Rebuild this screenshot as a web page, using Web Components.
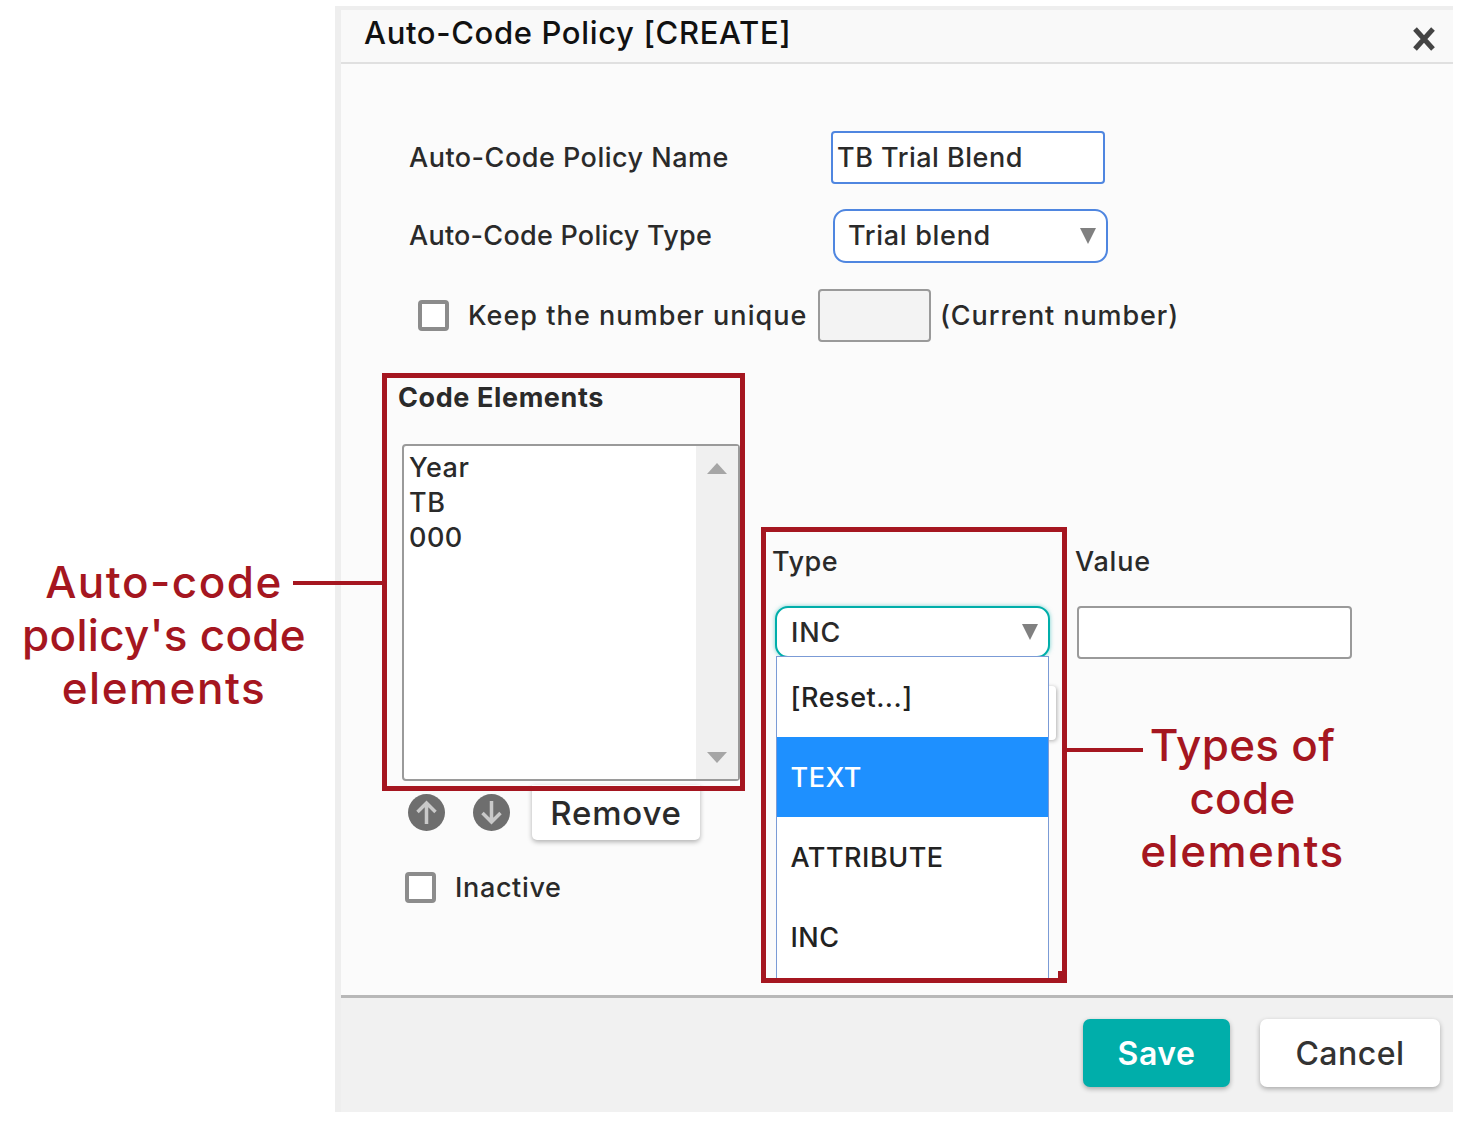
<!DOCTYPE html>
<html>
<head>
<meta charset="utf-8">
<title>Auto-Code Policy</title>
<style>
  html, body { margin: 0; background: #fff; }
  body { width: 1470px; height: 1133px; position: relative; overflow: hidden; font-family: Inter, "Open Sans", sans-serif; font-weight: 500; font-size: 27px; letter-spacing: .5px; color: #2a2a2a; }
  .row { display: flex; align-items: center; }
  .section { display: flex; align-items: flex-start; margin-top: 31px; padding-left: 41px; }
</style>
</head>
<body>
<template id="dialog-tpl">
  <style>
    :host { display: flex; flex-direction: column; width: 1112px; height: 1102px; margin: 6px 0 0 335px; border-left: 6px solid #eee; border-top: 4px solid #eee; background: #fbfbfb; }
    header { display: flex; justify-content: space-between; height: 52px; padding-left: 23px; background: #f9f9f9; border-bottom: 2px solid #e0e0e0; font-size: 31px; letter-spacing: .65px; color: #111; line-height: 46px; box-sizing: content-box; }
    header svg { margin: 16px 17px 0 0; }
    main { height: 931px; padding-top: 67px; box-sizing: border-box; display: flex; flex-direction: column; }
    footer { flex: 1; display: flex; justify-content: flex-end; gap: 30px; padding: 21px 13px 0 0; background: #f1f1f1; border-top: 3px solid #b8b8b8; }
  </style>
  <header><span><slot name="title"></slot></span>
    <svg width="24" height="26" viewBox="0 0 24 26"><path d="M3 3L21 23M21 3L3 23" stroke="#444" stroke-width="5" fill="none"/></svg>
  </header>
  <main><slot></slot></main>
  <footer><slot name="footer"></slot></footer>
</template>

<template id="textbox-tpl">
  <style>
    :host { display: flex; align-items: center; box-sizing: border-box; background: #fff; border: 2px solid #9a9a9a; border-radius: 4px; padding-left: 4px; height: 53px; width: 275px; white-space: nowrap; }
    :host([focus]) { border-color: #4f86e0; width: 274px; }
    :host([disabled]) { background: #f3f3f3; }
  </style>
  <slot></slot>
</template>

<template id="select-tpl">
  <style>
    :host { display: flex; align-items: center; justify-content: space-between; box-sizing: border-box; width: 275px; height: 54px; background: #fff; border: 2px solid #4f86e0; border-radius: 13px; padding: 0 10px 0 13px; }
    :host(:not([active])) span { padding-bottom: 2px; }
    :host([active]) { border-color: #00aeaa; box-shadow: 0 0 4px #00aeaa88; height: 52px; padding-left: 14px; letter-spacing: .8px; }
    i { border-left: 8.5px solid transparent; border-right: 8.5px solid transparent; border-top: 16px solid #808080; }
  </style>
  <span><slot></slot></span><i></i>
</template>

<template id="check-tpl">
  <style>
    :host { display: block; box-sizing: border-box; width: 31px; height: 31px; border: 4px solid #8c8c8c; border-radius: 4px; background: #fff; filter: blur(.6px); flex: none; }
  </style>
</template>

<template id="field-tpl">
  <style>
    :host { display: flex; align-items: center; padding-left: 68px; margin-bottom: 25px; }
    div { width: var(--label-width, 422px); padding-bottom: var(--label-lift, 0); white-space: nowrap; }
  </style>
  <div><slot name="label"></slot></div><slot></slot>
</template>

<template id="highlight-tpl">
  <style>
    :host { display: block; position: relative; z-index: 2; box-sizing: border-box; border: 5px solid #a51620; }
  </style>
  <slot></slot>
</template>

<template id="listbox-tpl">
  <style>
    :host { display: flex; box-sizing: border-box; width: 338px; height: 337px; background: #fff; border: 2px solid #9a9a9a; border-radius: 4px; }
    ul { flex: 1; list-style: none; margin: 0; padding: 4px 0 0 5px; line-height: 35px; }
    aside { width: 42px; background: #f0f0f0; display: flex; flex-direction: column; justify-content: space-between; align-items: center; padding: 17px 0 16px; }
    .up { border-left: 10px solid transparent; border-right: 10px solid transparent; border-bottom: 11px solid #a6a6a6; }
    .down { border-left: 10px solid transparent; border-right: 10px solid transparent; border-top: 11px solid #a6a6a6; }
  </style>
  <ul><slot></slot></ul>
  <aside><i class="up"></i><i class="down"></i></aside>
</template>

<template id="round-tpl">
  <style>
    :host { display: block; width: 37px; height: 37px; flex: none; }
    svg { display: block; filter: blur(.4px); }
  </style>
  <svg width="37" height="37" viewBox="0 0 37 37"><circle cx="18.5" cy="18.5" r="18.5" fill="#6e6e6e"/><path id="arrow" d="M18.5 30V9M9.5 18L18.5 9L27.5 18" stroke="#c9c9c9" stroke-width="3.5" fill="none"/></svg>
</template>

<template id="button-tpl">
  <style>
    :host { display: flex; align-items: center; justify-content: center; box-sizing: border-box; background: #fff; border-radius: 7px; box-shadow: 0 2px 5px #0000004d; color: #333; font-size: 32px; letter-spacing: .5px; height: 68px; width: 180px; }
    :host([primary]) { background: #00aeaa; color: #fff; width: 147px; font-weight: 600; }
    :host([small]) { width: 168px; height: 55px; border-radius: 0 0 5px 5px; color: #2a2a2a; font-size: 33px; letter-spacing: .8px; }
  </style>
  <slot></slot>
</template>

<template id="dropdown-tpl">
  <style>
    :host { display: block; position: absolute; left: 10px; top: 124px; width: 273px; height: 322px; box-sizing: border-box; background: #fff; border: 1px solid #7b9bd6; border-bottom: 0; z-index: 2; }
  </style>
  <slot></slot>
</template>

<template id="option-tpl">
  <style>
    :host { display: flex; align-items: center; height: 80px; padding-left: 13.5px; color: #222; }
    :host([selected]) { background: #1e90ff; color: #fff; }
  </style>
  <slot></slot>
</template>

<template id="callout-tpl">
  <style>
    :host { display: block; position: absolute; z-index: 3; text-align: center; color: #a51620; font-size: 44px; letter-spacing: .3px; line-height: 53px; white-space: nowrap; }
    ::slotted(span) { letter-spacing: 1.5px; }
  </style>
  <slot></slot>
</template>

<x-dialog>
  <span slot="title">Auto-Code Policy [CREATE]</span>

  <x-field>
    <span slot="label">Auto-Code Policy Name</span>
    <x-textbox focus>TB Trial Blend</x-textbox>
  </x-field>
  <x-field style="--label-width:424px;--label-lift:2px;margin-bottom:26px">
    <span slot="label" style="letter-spacing:.25px">Auto-Code Policy Type</span>
    <x-select style="letter-spacing:.7px">Trial blend</x-select>
  </x-field>
  <div class="row" style="padding-left:77px;height:53px">
    <x-check></x-check>
    <span style="width:350px;margin-left:19px;white-space:nowrap;letter-spacing:1.05px">Keep the number unique</span>
    <x-textbox disabled style="width:113px"></x-textbox>
    <span style="margin-left:9px;white-space:nowrap;letter-spacing:.9px">(Current number)</span>
  </div>

  <div class="section">
    <div style="width:363px">
      <x-highlight style="height:418px;padding:0 0 0 10px">
        <div style="font-weight:700;height:66px;line-height:40px;margin-left:1px;letter-spacing:.6px">Code Elements</div>
        <x-listbox style="margin-left:5px">
          <li>Year</li>
          <li>TB</li>
          <li>000</li>
        </x-listbox>
      </x-highlight>
      <div class="row" style="padding-left:26px;gap:28px;align-items:flex-start;margin-top:-6px">
        <x-round style="margin-top:9px"></x-round>
        <x-round down style="margin-top:9px"></x-round>
        <x-button small style="margin-left:-6px">Remove</x-button>
      </div>
      <div class="row" style="padding-left:23px;gap:19px;margin-top:31px">
        <x-check></x-check>
        <span style="letter-spacing:.65px">Inactive</span>
      </div>
    </div>

    <x-highlight style="width:306px;height:456px;margin:154px 0 0 16px">
      <div style="height:74px;line-height:60px;padding-left:6px">Type</div>
      <x-select active style="margin-left:9px">INC</x-select>
      <div style="position:absolute;left:270px;top:154px;width:20px;height:54px;background:#fff;border-radius:4px;box-shadow:1px 1px 4px #0000004d"></div>
      <x-dropdown>
        <x-option>[Reset...]</x-option>
        <x-option selected>TEXT</x-option>
        <x-option>ATTRIBUTE</x-option>
        <x-option>INC</x-option>
      </x-dropdown>
      <div style="position:absolute;right:0;bottom:0;width:4px;height:7px;background:#a51620;z-index:3"></div>
    </x-highlight>

    <div style="margin:154px 0 0 8px">
      <div style="height:79px;line-height:70px;letter-spacing:.8px">Value</div>
      <x-textbox style="margin-left:2px"></x-textbox>
    </div>
  </div>

  <x-button slot="footer" primary>Save</x-button>
  <x-button slot="footer">Cancel</x-button>
</x-dialog>

<x-callout style="left:0;top:556px;width:328px"><span>Auto-code</span><br>policy's code<br><span>elements</span></x-callout>
<x-callout style="left:1100px;top:719px;width:285px">Types of<br>code<br><span>elements</span></x-callout>
<div style="position:absolute;left:293px;top:581px;width:92px;height:4px;background:#a51620;z-index:3"></div>
<div style="position:absolute;left:1067px;top:748px;width:76px;height:4px;background:#a51620;z-index:3"></div>

<script>
  // every element just clones its template into an open shadow root
  const simple = {
    "x-dialog": "dialog-tpl",
    "x-textbox": "textbox-tpl",
    "x-select": "select-tpl",
    "x-check": "check-tpl",
    "x-field": "field-tpl",
    "x-highlight": "highlight-tpl",
    "x-listbox": "listbox-tpl",
    "x-button": "button-tpl",
    "x-dropdown": "dropdown-tpl",
    "x-option": "option-tpl",
    "x-callout": "callout-tpl",
  }

  Object.entries(simple).forEach(([name, id]) => {
    customElements.define(name, class extends HTMLElement {
      constructor() {
        super()
        this.attachShadow({ mode: "open" })
        this.shadowRoot.appendChild(document.getElementById(id).content.cloneNode(true))
      }
    })
  })

  class XRound extends HTMLElement {
    constructor() {
      super()
      this.attachShadow({ mode: "open" })
      this.shadowRoot.appendChild(document.getElementById("round-tpl").content.cloneNode(true))
      if (this.hasAttribute("down")) {
        this.shadowRoot.getElementById("arrow").setAttribute("d", "M18.5 7V28M9.5 19L18.5 28L27.5 19")
      }
    }
  }
  customElements.define("x-round", XRound)
</script>
</body>
</html>
